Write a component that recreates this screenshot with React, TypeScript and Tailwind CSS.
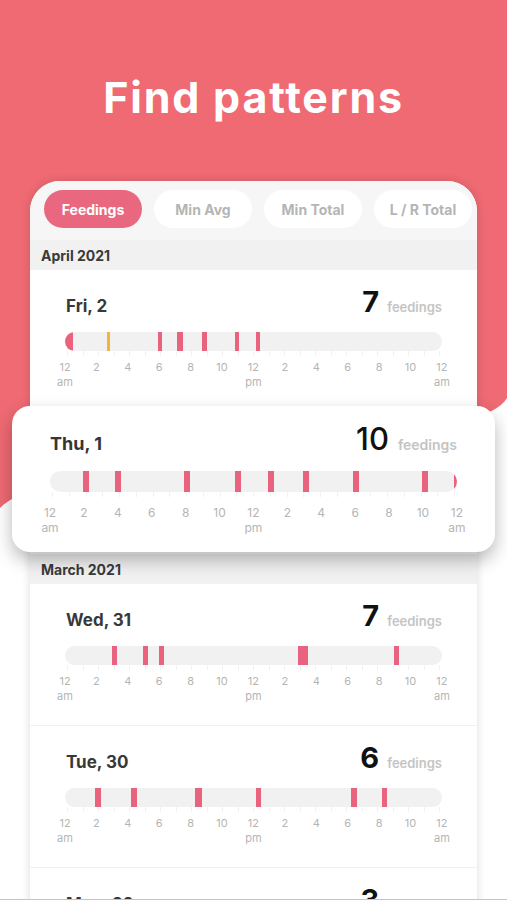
import type { ReactNode } from "react";

type Mark = { at: number; w: number; color?: string };

type Day = {
  label: string;
  count: number;
  marks: Mark[];
};

const PINK_MARK = "#e9637f";
const YELLOW_MARK = "#f4b43a";

const axisLabels: string[][] = [
  ["12", "am"],
  ["2"],
  ["4"],
  ["6"],
  ["8"],
  ["10"],
  ["12", "pm"],
  ["2"],
  ["4"],
  ["6"],
  ["8"],
  ["10"],
  ["12", "am"],
];

const fri: Day = {
  label: "Fri, 2",
  count: 7,
  marks: [
    { at: 0.2, w: 9 },
    { at: 2.8, w: 3, color: YELLOW_MARK },
    { at: 6.05, w: 4 },
    { at: 7.32, w: 6 },
    { at: 8.91, w: 5 },
    { at: 10.92, w: 4 },
    { at: 12.29, w: 4 },
  ],
};

const thu: Day = {
  label: "Thu, 1",
  count: 10,
  marks: [
    { at: 2.12, w: 6 },
    { at: 4.0, w: 6 },
    { at: 8.06, w: 6 },
    { at: 11.06, w: 6 },
    { at: 13.06, w: 6 },
    { at: 15.12, w: 6 },
    { at: 18.06, w: 6 },
    { at: 22.12, w: 6 },
    { at: 23.98, w: 6 },
  ],
};

const march: Day[] = [
  {
    label: "Wed, 31",
    count: 7,
    marks: [
      { at: 3.14, w: 5 },
      { at: 5.11, w: 5 },
      { at: 6.13, w: 5 },
      { at: 15.17, w: 10 },
      { at: 21.1, w: 5 },
    ],
  },
  {
    label: "Tue, 30",
    count: 6,
    marks: [
      { at: 2.1, w: 6 },
      { at: 4.38, w: 6 },
      { at: 8.48, w: 7 },
      { at: 12.35, w: 5 },
      { at: 18.4, w: 6 },
      { at: 20.35, w: 5 },
    ],
  },
  {
    label: "Mon, 29",
    count: 3,
    marks: [
      { at: 4.2, w: 6 },
      { at: 11.5, w: 6 },
      { at: 19.3, w: 6 },
    ],
  },
];

const tabs = ["Feedings", "Min Avg", "Min Total", "L / R Total"];

function Timeline({ marks, big = false }: { marks: Mark[]; big?: boolean }) {
  return (
    <div>
      <div
        className={
          "relative overflow-hidden rounded-full bg-[#f1f1f1] " +
          (big ? "h-[21px]" : "h-[19px]")
        }
      >
        {marks.map((mark, i) => (
          <span
            key={i}
            className="absolute inset-y-0"
            style={{
              left: `calc(${(mark.at / 24) * 100}% - ${mark.w / 2}px)`,
              width: mark.w,
              backgroundColor: mark.color ?? PINK_MARK,
            }}
          />
        ))}
      </div>
      <div className="flex h-[5px] justify-between px-[2px]">
        {Array.from({ length: 25 }, (_, i) => (
          <span key={i} className="w-px bg-[#f1f1f1]" />
        ))}
      </div>
      <div
        className={
          "-mx-3 flex justify-between text-center text-[#b5b5b5] " +
          (big ? "mt-[8px] text-[12px] leading-[15px]" : "mt-[4px] text-[11px] leading-[15px]")
        }
      >
        {axisLabels.map((lines, i) => (
          <div key={i} className="flex w-6 flex-col items-center">
            {lines.map((line) => (
              <span key={line}>{line}</span>
            ))}
          </div>
        ))}
      </div>
    </div>
  );
}

function DayRow({ day }: { day: Day }) {
  return (
    <div className="h-[142px] border-b border-[#f0f0f0] bg-white px-[35px] pt-[17px]">
      <div className="flex h-[32px] items-baseline justify-between">
        <span className="pl-px text-[17px] font-bold text-[#383838]">{day.label}</span>
        <span className="flex items-baseline gap-[8px]">
          <span className="text-[29px] leading-none font-bold text-[#111]">{day.count}</span>
          <span className="text-[13px] font-semibold text-[#c4c4c4]">feedings</span>
        </span>
      </div>
      <div className="mt-[13px]">
        <Timeline marks={day.marks} />
      </div>
    </div>
  );
}

function HighlightedDay({ day }: { day: Day }) {
  return (
    <div className="flex h-[142px] flex-col bg-white">
      <div className="relative z-10 -mx-[18px] -mt-[6px] h-[146px] rounded-[18px] bg-white px-[38px] pt-[17px] shadow-[0_8px_18px_rgba(0,0,0,0.28)]">
        <div className="flex h-[36px] items-baseline justify-between">
          <span className="text-[18px] font-bold text-[#353535]">{day.label}</span>
          <span className="flex items-baseline gap-[9px]">
            <span className="text-[31px] leading-none font-medium text-[#111]">{day.count}</span>
            <span className="text-[14px] font-semibold text-[#c4c4c4]">feedings</span>
          </span>
        </div>
        <div className="mt-[12px]">
          <Timeline marks={day.marks} big />
        </div>
      </div>
    </div>
  );
}

function MonthHeader({ children }: { children: ReactNode }) {
  return (
    <div className="flex h-[30px] items-center bg-[#f1f1f1] px-[11px] text-[14px] font-bold text-[#3a3a3a]">
      {children}
    </div>
  );
}

export default function App() {
  return (
    <div
      className="relative h-[900px] w-full overflow-hidden border-b border-[#c4c4c4] bg-white"
      style={{ fontFamily: "Inter, 'Noto Sans', sans-serif" }}
    >
      <svg
        className="absolute top-0 left-0 h-[520px] w-full"
        viewBox="0 0 507 520"
        preserveAspectRatio="none"
      >
        <path
          d="M0 0 H507 V398 C482 440 320 420 250 440 S 40 470 0 508 Z"
          fill="#ef6a73"
        />
      </svg>

      <div className="relative">
        <div className="h-[181px] pt-[76px] text-center">
          <h1 className="text-[43px] leading-none font-bold tracking-[1.8px] text-white">
            Find patterns
          </h1>
        </div>

        <div className="mx-[30px] rounded-t-[30px] bg-white shadow-[0_0_10px_rgba(0,0,0,0.14)]">
          <div className="flex gap-[12px] rounded-t-[30px] bg-[#f6f6f6] pt-[9px] pb-[12px] pl-[14px]">
            {tabs.map((tab, i) => (
              <button
                key={tab}
                type="button"
                className={
                  "h-[38px] w-[98px] shrink-0 rounded-full text-[14px] font-bold " +
                  (i === 0 ? "bg-[#e9687f] text-white" : "bg-white text-[#b5b5b5]")
                }
              >
                {tab}
              </button>
            ))}
          </div>

          <MonthHeader>April 2021</MonthHeader>
          <DayRow day={fri} />
          <HighlightedDay day={thu} />
          <MonthHeader>March 2021</MonthHeader>
          {march.map((day) => (
            <DayRow key={day.label} day={day} />
          ))}
        </div>
      </div>
    </div>
  );
}
